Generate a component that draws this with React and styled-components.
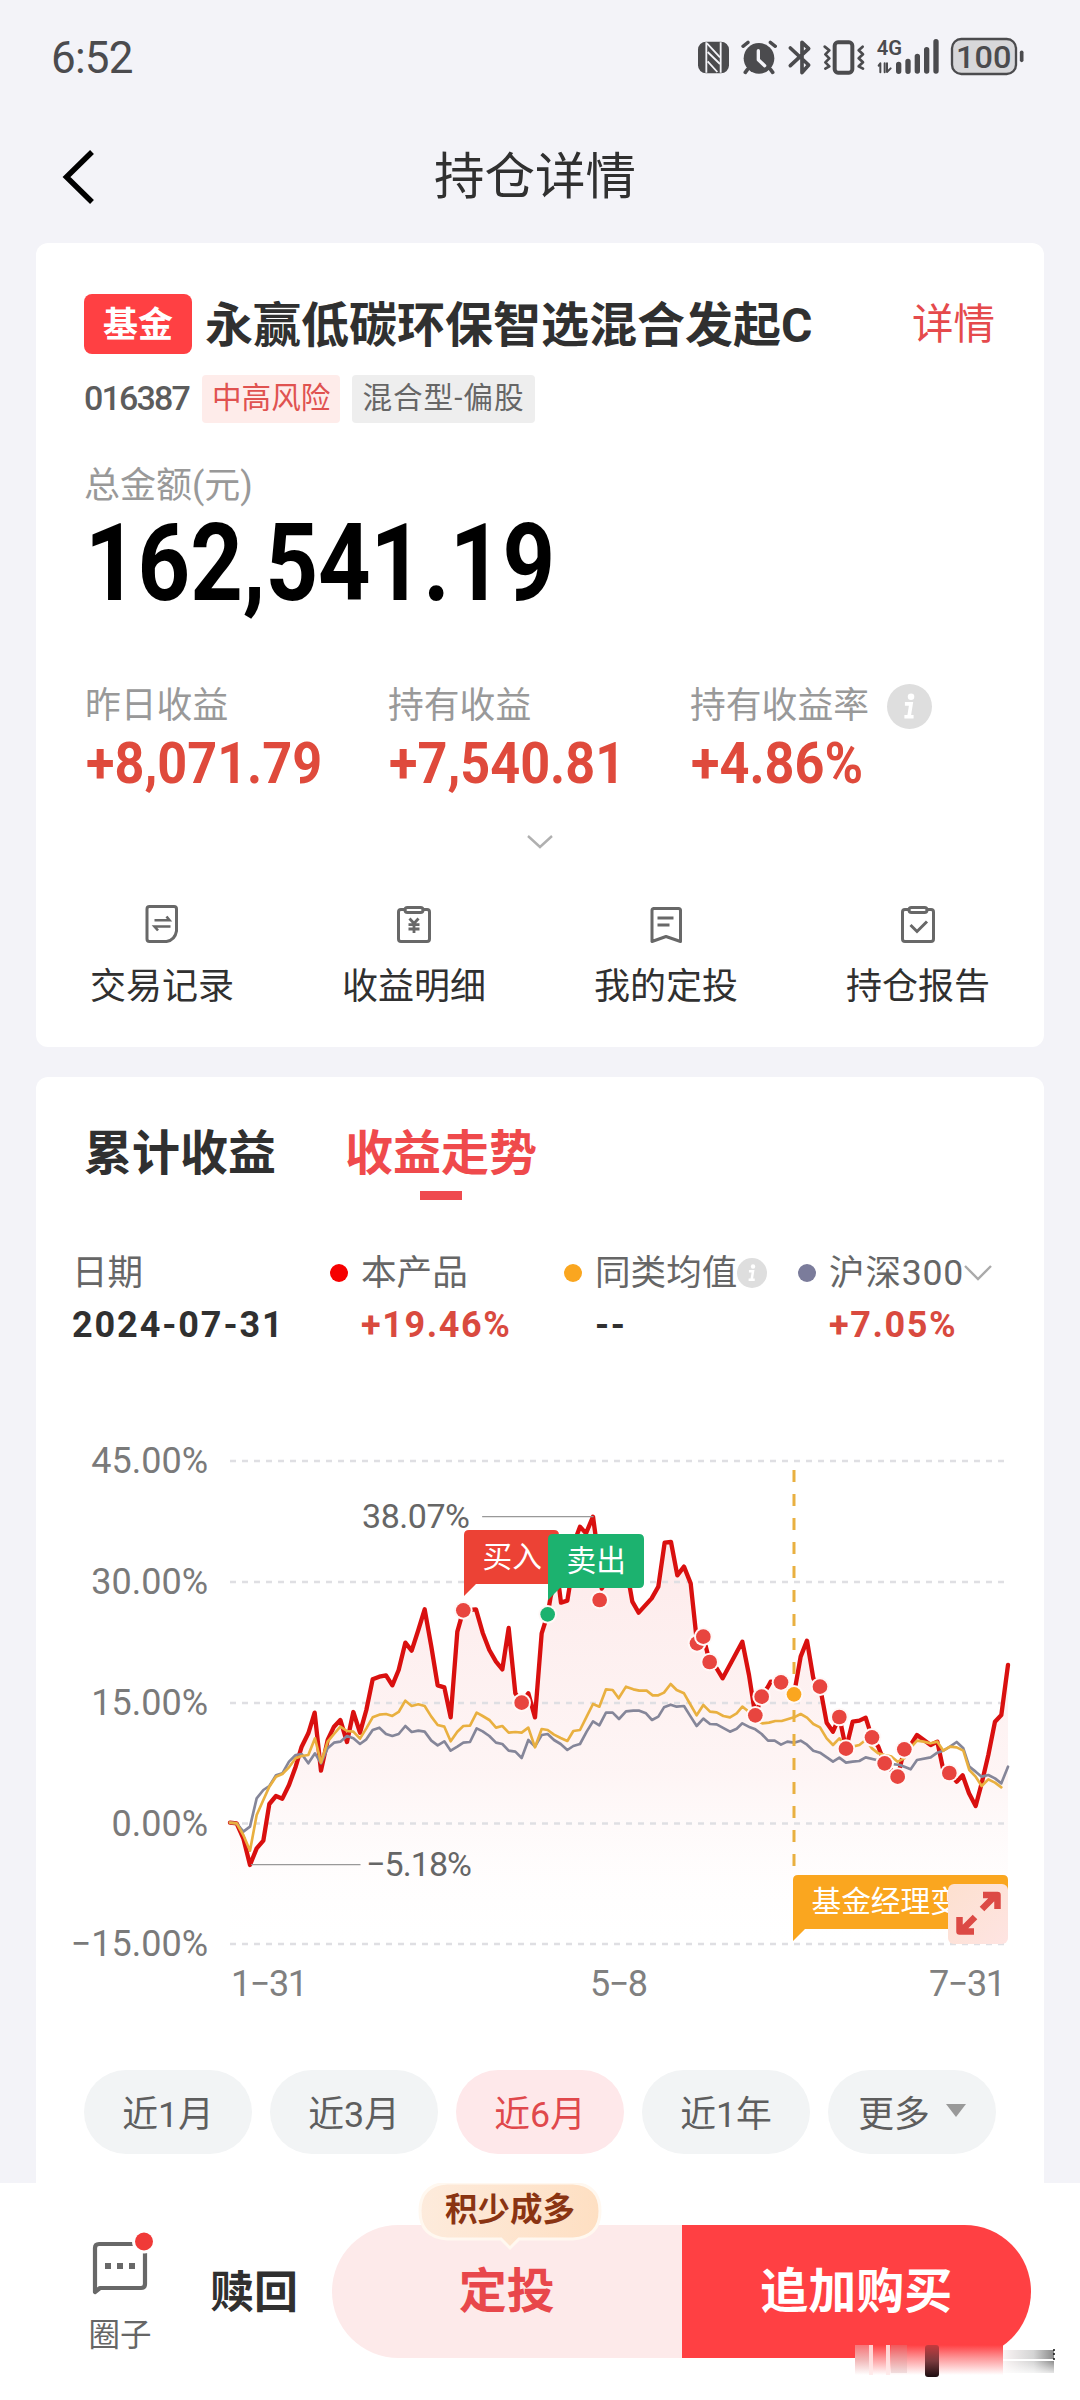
import React from "react";
import styled, { createGlobalStyle } from "styled-components";

const GlobalStyle = createGlobalStyle`
  * { box-sizing: border-box; }
  body {
    margin: 0;
    background: #f3f3f8;
    font-family: Roboto, "Noto Sans CJK SC", sans-serif;
    color: #303030;
  }
`;

const Screen = styled.div`
  width: 1080px;
  height: 2400px;
  display: flex;
  flex-direction: column;
  overflow: hidden;
  background: #f3f3f8;
  white-space: nowrap;
`;

const StatusBar = styled.header`
  height: 114px;
  padding: 20px 20px 0 51px;
  display: flex;
  justify-content: space-between;
`;
const Clock = styled.div`
  font-size: 44px;
  line-height: 77px;
  color: #4b4b4e;
  letter-spacing: -0.8px;
`;

const NavBar = styled.nav`
  height: 129px;
  padding: 0 64px 0 60px;
  display: grid;
  grid-template-columns: 40px 1fr 46px;
  align-items: start;
`;
const BackIcon = styled.svg`
  width: 40px;
  height: 60px;
  margin-top: 33px;
`;
const NavTitle = styled.h1`
  margin: 0;
  text-align: center;
  font-size: 50.5px;
  font-weight: 400;
  line-height: 125px;
`;

const Card = styled.section`
  margin: 0 36px 30px;
  height: ${(p) => p.$h}px;
  flex: none;
  background: #fff;
  border-radius: ${(p) => (p.$open ? "12px 12px 0 0" : "12px")};
  display: flex;
  flex-direction: column;
`;

const FundHeader = styled.div`
  margin: 51px 49px 0 48px;
  height: 60px;
  display: flex;
  align-items: center;
`;
const FundTag = styled.span`
  width: 108px;
  height: 60px;
  border-radius: 8px;
  background: #ff4043;
  color: #fff;
  font-size: 35px;
  font-weight: 700;
  line-height: 63px;
  text-align: center;
`;
const FundName = styled.h2`
  margin: 0 auto 0 13px;
  font-size: 48px;
  font-weight: 700;
  line-height: 60px;
  padding-top: 3px;
`;
const DetailLink = styled.a`
  font-size: 41.5px;
  line-height: 62px;
  padding-top: 2px;
  color: #e54a4c;
`;

const TagRow = styled.div`
  margin: 21px 48px 0;
  height: 48px;
  display: flex;
  align-items: center;
`;
const FundCode = styled.span`
  width: 118px;
  padding-bottom: 3px;
  font-size: 34px;
  font-weight: 500;
  letter-spacing: -1.8px;
  color: #5c5c5c;
`;
const SmallTag = styled.span`
  height: 48px;
  padding: 0 10px;
  margin-right: 12px;
  border-radius: 4px;
  font-size: 29.6px;
  line-height: 46px;
  letter-spacing: ${(p) => (p.$risk ? 0 : 1)}px;
  color: ${(p) => (p.$risk ? "#e05250" : "#666")};
  background: ${(p) => (p.$risk ? "#feecea" : "#eeeeee")};
`;

const TotalLabel = styled.div`
  margin: 35px 0 0 48px;
  height: 56px;
  font-size: 36px;
  line-height: 57px;
  color: #999;
`;
const TotalValue = styled.div`
  margin: 0 0 0 49px;
  height: 100px;
  font-size: 107px;
  font-weight: 700;
  line-height: 100px;
  color: #000;
  transform: scaleX(0.857);
  transform-origin: 0 50%;
`;

const StatGrid = styled.div`
  margin: 64px 0 0 49px;
  display: grid;
  grid-template-columns: 303px 302px 303px;
`;
const StatLabel = styled.div`
  height: 56px;
  display: flex;
  align-items: center;
  gap: 18px;
  font-size: 35.8px;
  line-height: 56px;
  color: #999;
`;
const StatValue = styled.div`
  height: 58px;
  margin-left: 1px;
  font-size: 58px;
  font-weight: 700;
  line-height: 58px;
  color: #df4a3c;
  transform: scaleX(0.9);
  transform-origin: 0 50%;
`;
const InfoSvg = styled.svg`
  width: ${(p) => p.$size}px;
  height: ${(p) => p.$size}px;
  flex: none;
`;
const ExpandRow = styled.div`
  height: 99px;
  display: flex;
  align-items: center;
  justify-content: center;
`;

const ActionGrid = styled.div`
  display: grid;
  grid-template-columns: repeat(4, 252px);
`;
const Action = styled.div`
  display: flex;
  flex-direction: column;
  align-items: center;
`;
const ActionIcon = styled.svg`
  width: 42px;
  height: 42px;
  margin-top: 12px;
`;
const ActionLabel = styled.span`
  margin-top: 14px;
  font-size: 36px;
  line-height: 56px;
`;

const Tabs = styled.div`
  margin: 44px 0 0 48px;
  height: 80px;
  display: flex;
  gap: 69px;
`;
const Tab = styled.div`
  font-size: 48px;
  font-weight: 700;
  line-height: 66px;
  color: ${(p) => (p.$active ? "#ef4a4c" : "#303030")};
  display: flex;
  flex-direction: column;
  align-items: center;
`;
const TabMark = styled.i`
  width: 42px;
  height: 9px;
  margin-top: 4px;
  background: #ef4a4e;
`;

const Legend = styled.div`
  margin: 44px 0 0 36px;
  height: 143px;
  display: grid;
  align-content: start;
  grid-template-columns: 258px 234px 234px 240px;
`;
const LegendCol = styled.div`
  display: flex;
  flex-direction: column;
  padding-left: ${(p) => (p.$first ? 0 : 31)}px;
`;
const LegendLabel = styled.div`
  margin-left: ${(p) => (p.$dot ? -31 : 0)}px;
  height: 56px;
  display: flex;
  align-items: center;
  font-size: 35.6px;
  line-height: 56px;
  letter-spacing: ${(p) => p.$ls || 0}px;
  color: #666;
`;
const Dot = styled.i`
  width: 18px;
  height: 18px;
  margin-right: 13px;
  border-radius: 50%;
  background: ${(p) => p.$c};
`;
const LegendValue = styled.div`
  height: 48px;
  font-size: 36px;
  font-weight: 700;
  line-height: 48px;
  letter-spacing: ${(p) => p.$ls || 1.6}px;
  color: ${(p) => (p.$up ? "#d94a3f" : "#303030")};
`;

const ChartSvg = styled.svg`
  display: block;
  width: 1008px;
  height: 640px;
  flex: none;
`;

const PillRow = styled.div`
  margin: 42px 48px 0;
  display: flex;
  gap: 18px;
`;
const Pill = styled.div`
  width: 168px;
  height: 84px;
  padding-bottom: 3px;
  border-radius: 42px;
  display: flex;
  align-items: center;
  justify-content: center;
  gap: 16px;
  font-size: 35.8px;
  color: ${(p) => (p.$active ? "#e0484c" : "#5e5e5e")};
  background: ${(p) => (p.$active ? "#fee8ea" : "#f2f4f5")};
`;

const Footer = styled.footer`
  position: relative;
  height: 217px;
  flex: none;
  margin-top: -30px;
  background: #fff;
  display: flex;
`;
const Circle = styled.div`
  width: 122px;
  margin-left: 59px;
  padding-top: 42px;
  display: flex;
  flex-direction: column;
  align-items: center;
  font-size: 31.5px;
  line-height: 46px;
  color: #666;
`;
const CircleIcon = styled.svg`
  width: 70px;
  height: 70px;
  margin-bottom: 18px;
`;
const Redeem = styled.div`
  width: 151px;
  padding-left: 29px;
  font-size: 44px;
  font-weight: 700;
  line-height: 221px;
`;
const BuyGroup = styled.div`
  margin-top: 42px;
  width: 699px;
  height: 133px;
  display: flex;
  border-radius: 67px;
  overflow: hidden;
`;
const BuyButton = styled.div`
  flex: 1;
  text-align: center;
  font-size: 48px;
  font-weight: 700;
  line-height: 133px;
  color: ${(p) => (p.$primary ? "#fff" : "#e8474b")};
  background: ${(p) => (p.$primary ? "#ff4043" : "#fdeaea")};
`;
const Bubble = styled.div`
  position: absolute;
  left: 417px;
  top: 0;
  width: 186px;
  height: 68px;
  display: flex;
  justify-content: center;
  font-size: 32.5px;
  font-weight: 700;
  line-height: 54px;
  color: #8a3412;
`;
const BubbleShape = styled.svg`
  position: absolute;
  inset: 0;
  width: 186px;
  height: 68px;
`;
const BubbleText = styled.span`
  position: relative;
`;
const Smear = styled.svg`
  position: absolute;
  left: 850px;
  top: 159px;
  width: 210px;
  height: 44px;
`;

function StatusIcons() {
  const c = "#4b4b4e";
  return (
    <svg width="400" height="80" viewBox="0 0 1200 240" fill="none" stroke={c} strokeLinecap="round" strokeLinejoin="round">
      <rect x="114" y="65" width="93" height="95" rx="24" fill={c} stroke="none" />
      <g stroke="#f3f3f8" strokeLinecap="butt" strokeWidth="5.500">
        <path d="M139 67V158M182 67V158" />
        <path d="M141 70L180 112M143 96L180 132M143 124L172 156" />
      </g>
      <circle cx="297" cy="115" r="46" fill={c} stroke="none" />
      <path d="M249 79L264 67M331 67L346 79" strokeWidth="10" />
      <path d="M262 149L256 157M332 149L338 157" strokeWidth="11" />
      <path d="M295 92V119L314 137" stroke="#f3f3f8" strokeWidth="10" />
      <path d="M391 84L446 135L426 158V67L446 86L391 137" strokeWidth="11" />
      <rect x="524" y="67" width="53" height="91" rx="10" strokeWidth="12" />
      <path d="M494 80L508 91L496 103L508 115L496 127L508 139L496 146" strokeWidth="8" />
      <path d="M608 80L596 91L609 103L596 115L609 127L596 139L609 146" strokeWidth="8" />
      <path d="M661 157V130L656 137M674 130V157M681 130V156L692 145" strokeWidth="6" />
      <path d="M716 133V154M744 124V154M772 109V153M800 89V153M828 65V153" strokeWidth="16" />
      <text x="650" y="106" fill={c} stroke="none" fontSize="61" fontWeight="600" textLength="76" lengthAdjust="spacingAndGlyphs">4G</text>
      <rect x="876" y="57" width="192" height="105" rx="28" fill="#d7d7da" strokeWidth="7" />
      <path d="M1085 97V121" strokeWidth="11" />
      <text x="888" y="143" fill={c} stroke="none" fontSize="94" fontWeight="500" textLength="166" lengthAdjust="spacingAndGlyphs">100</text>
    </svg>
  );
}

function Info({ size }) {
  return (
    <InfoSvg $size={size} viewBox="0 0 44 44">
      <circle cx="22" cy="22" r="22" fill="#dedede" />
      <circle cx="23.5" cy="12.5" r="3.2" fill="#fff" />
      <path d="M17.5 19.5H23.5L21.5 32M17 32H26" stroke="#fff" strokeWidth="3.6" fill="none" />
    </InfoSvg>
  );
}

function Chevron({ w, h, color }) {
  return (
    <svg width={w} height={h} viewBox={`0 0 ${w} ${h}`} fill="none" stroke={color} strokeWidth="2.4">
      <path d={`M1 1L${w / 2} ${h - 2}L${w - 1} 1`} />
    </svg>
  );
}

const iconArt = {
  record: (
    <>
      <path d="M8.500 3.500H33Q35.500 3.500 35.500 6V28Q34 37 25.500 38.500H8.500Q6 38.500 6 36V6Q6 3.500 8.500 3.500Z" />
      <path d="M13.500 17.300H28.500L25.500 13.500M29.500 23.500H13.500L17 27.500" strokeWidth="2.600" />
    </>
  ),
  detail: (
    <>
      <path d="M12 6.500H8Q5.500 6.500 5.500 9V36Q5.500 38.500 8 38.500H34Q36.500 38.500 36.500 36V9Q36.500 6.500 34 6.500H30" />
      <rect x="12" y="4.500" width="18" height="5" rx="2.500" />
      <path d="M16.500 15.500L21 20.500L25.500 15.500M21 20V30M15.500 21.700H26.500M15.500 26H26.500" strokeWidth="2.800" />
    </>
  ),
  plan: (
    <>
      <path d="M8 5.500H33.500Q35.500 5.500 35.500 7.500V38.500L21 33.500L7 38.500V7.500Q7 5.500 9 5.500" strokeLinejoin="round" />
      <path d="M12.500 15H28.500M12.500 22H24.500" />
    </>
  ),
  report: (
    <>
      <path d="M12 6.500H8Q5.500 6.500 5.500 9V36Q5.500 38.500 8 38.500H34Q36.500 38.500 36.500 36V9Q36.500 6.500 34 6.500H30" />
      <rect x="12" y="4.500" width="18" height="5" rx="2.500" />
      <path d="M13.500 22L20 28.500L30 18.500" />
    </>
  ),
};

const actions = [
  ["record", "交易记录"],
  ["detail", "收益明细"],
  ["plan", "我的定投"],
  ["report", "持仓报告"],
];

const product =
  "90,1178 110,1180 130,1225 150,1305 170,1255 190,1232 208,1122 228,1098 247,1106 267,1065 287,1010 305,950 325,910 344,848 363,1022 383,930 402,890 421,870 441,936 460,846 480,908 499,840 518,748 538,740 558,736 577,766 596,720 616,638 635,662 655,600 674,538 694,650 713,766 733,772 752,862 772,605 790,541 828,538 848,608 868,660 888,695 907,718 926,594 946,790 965,818 985,790 1005,862 1025,610 1043,553 1052,500 1072,430 1083,518 1102,512 1112,450 1125,330 1140,290 1158,310 1179,260 1198,400 1205,476 1240,420 1270,400 1290,475 1297,515 1316,548 1355,505 1375,470 1394,338 1413,336 1432,436 1452,410 1472,460 1487,600 1491,640 1510,620 1529,695 1550,715 1568,745 1627,635 1647,735 1666,856 1685,800 1704,770 1712,755 1743,757 1782,793 1802,680 1821,632 1840,745 1860,770 1880,878 1899,905 1918,861 1938,956 1958,875 1978,872 1997,863 2016,922 2035,950 2054,1000 2093,1040 2113,958 2132,945 2151,915 2192,945 2212,935 2230,1020 2248,1029 2270,1055 2288,1036 2307,1090 2327,1128 2345,1060 2365,975 2385,875 2404,855 2424,705";
const average =
  "90,1178 110,1180 130,1215 150,1262 170,1155 190,1110 208,1070 228,1040 247,1032 267,1012 287,985 305,978 325,975 345,925 363,998 383,935 402,912 421,890 441,903 460,905 480,926 499,895 518,862 538,854 558,852 577,858 596,846 616,812 635,828 655,823 674,828 694,860 713,885 733,890 752,934 772,905 790,888 810,887 830,848 848,858 868,870 888,893 907,888 926,908 946,906 965,908 985,893 1005,952 1025,897 1043,900 1062,914 1082,924 1102,933 1120,903 1140,900 1160,860 1179,822 1198,830 1218,778 1238,780 1256,805 1278,770 1300,778 1318,782 1340,782 1358,796 1375,796 1392,788 1412,762 1430,780 1452,790 1472,825 1490,856 1510,825 1530,845 1550,847 1570,858 1590,862 1610,850 1627,830 1640,840 1666,870 1687,880 1707,878 1726,873 1745,873 1782,862 1802,852 1821,863 1840,882 1860,892 1880,925 1899,945 1918,925 1938,950 1958,950 1978,945 1997,930 2016,955 2035,970 2054,975 2075,980 2093,995 2113,985 2130,955 2151,932 2171,935 2192,940 2212,935 2230,962 2250,950 2270,952 2290,962 2308,1020 2327,1040 2345,1068 2365,1048 2385,1058 2404,1072";
const index300 =
  "90,1178 110,1180 130,1205 150,1190 170,1105 190,1080 208,1068 228,1036 247,1030 267,995 287,975 305,972 325,1000 345,970 363,1000 383,955 402,938 421,935 441,918 460,925 480,942 499,928 518,900 538,893 558,912 577,918 596,912 616,888 635,906 655,902 674,905 694,932 713,946 733,934 752,962 772,950 790,938 810,936 830,895 848,904 868,918 888,938 907,942 926,962 946,965 965,984 985,930 1005,950 1025,915 1043,912 1062,930 1082,942 1102,960 1120,948 1140,942 1160,905 1179,874 1198,886 1218,848 1238,848 1257,867 1278,844 1300,842 1318,842 1338,850 1356,870 1375,860 1392,832 1412,824 1430,830 1452,828 1472,860 1490,888 1510,866 1530,882 1550,883 1590,905 1610,896 1627,880 1650,892 1666,898 1685,912 1704,932 1724,932 1743,944 1762,935 1782,938 1802,932 1821,944 1840,962 1860,968 1899,995 1918,983 1938,998 1958,995 1978,993 1997,982 2030,990 2060,1000 2100,1005 2132,1018 2151,990 2192,982 2212,968 2230,962 2250,950 2270,936 2290,955 2308,1010 2327,1025 2345,1040 2365,1035 2385,1045 2404,1060 2424,1010";

const buys = [
  [790, 541], [965, 818], [1199, 510], [1491, 640], [1510, 620], [1529, 696], [1666, 856],
  [1685, 800], [1743, 757], [1860, 770], [1918, 861], [1938, 956], [2016, 922], [2054, 1000],
  [2093, 1040], [2113, 958], [2248, 1029],
];
const axis = [["45.00%", 1461], ["30.00%", 1582], ["15.00%", 1703], ["0.00%", 1823.5], ["−15.00%", 1944]];

function Marker({ x, y, color }) {
  return (
    <>
      <circle cx={x} cy={y} r="28" fill="#fff8f7" />
      <circle cx={x} cy={y} r="22" fill={color} />
    </>
  );
}

function Flag({ x, y, w, color, text }) {
  return (
    <>
      <path d={`M${x} ${y + 66}V${y + 5}Q${x} ${y} ${x + 5} ${y}H${x + w - 5}Q${x + w} ${y} ${x + w} ${y + 5}V${y + 49}Q${x + w} ${y + 54} ${x + w - 5} ${y + 54}H${x + 12}Z`} fill={color} />
      <text x={x + 18.500} y={y + 37} fill="#fff" fontSize="29.700">{text}</text>
    </>
  );
}

function TrendChart() {
  return (
    <ChartSvg viewBox="36 1388 1008 640">
      <defs>
        <linearGradient id="area" x1="0" y1="1517" x2="0" y2="1944" gradientUnits="userSpaceOnUse">
          <stop offset="0" stopColor="#fce0e0" stopOpacity="0.700" />
          <stop offset="0.600" stopColor="#fdeeee" stopOpacity="0.600" />
          <stop offset="1" stopColor="#fff" stopOpacity="0.100" />
        </linearGradient>
        <linearGradient id="expand" x1="0" y1="0" x2="1" y2="1">
          <stop offset="0" stopColor="#fde0cf" />
          <stop offset="1" stopColor="#fee4e2" />
        </linearGradient>
      </defs>
      <polygon points={`230,1944 ${product.split(" ").map((p) => { const [x, y] = p.split(","); return `${200 + x / 3},${1430 + y / 3}`; }).join(" ")} 1008,1944`} fill="url(#area)" />
      {axis.map(([t, y]) => (
        <g key={t}>
          <path d={`M230 ${y}H1006`} stroke="#dfdfe3" strokeWidth="2.400" strokeDasharray="6 6" />
          <text x="208" y={y + 12} textAnchor="end" fontSize="36" fill="#7a7a7a">{t}</text>
        </g>
      ))}
      <g fontSize="36" fill="#808080">
        <text x="231" y="1996" textLength="77">1−31</text>
        <text x="590" y="1996" textLength="58">5−8</text>
        <text x="929" y="1996" textLength="77">7−31</text>
      </g>
      <g transform="translate(200 1430) scale(0.33333)" fill="none" strokeLinejoin="round" strokeLinecap="round">
        <polyline points={product} stroke="#d9100f" strokeWidth="13" />
        <polyline points={index300} stroke="#858699" strokeWidth="8" />
        <polyline points={average} stroke="#e9b040" strokeWidth="8" />
        <path d="M1782 120V1310" stroke="#e9b040" strokeWidth="9" strokeDasharray="36 36" strokeLinecap="butt" />
        <path d="M848 260H1179M155 1304H480" stroke="#999" strokeWidth="4" />
        {buys.map(([x, y]) => (
          <Marker key={x} x={x} y={y} color="#e8453f" />
        ))}
        <Marker x={1782} y={793} color="#faa61f" />
        <Marker x={1043} y={553} color="#1cb26f" />
      </g>
      <text x="362" y="1527.500" fontSize="34" fill="#666" textLength="108">38.07%</text>
      <text x="366" y="1875.500" fontSize="34" fill="#666" textLength="106">−5.18%</text>
      <Flag x={464} y={1530} w={95} color="#ec4235" text="买入" />
      <Flag x={548} y={1534} w={96} color="#1cb26f" text="卖出" />
      <Flag x={793} y={1875} w={215} color="#faa61f" text="基金经理变更" />
      <rect x="948" y="1884" width="60" height="60" rx="6" fill="url(#expand)" />
      <g fill="none" stroke="#dc4a45" strokeWidth="6.500" strokeLinejoin="round">
        <path d="M982 1909L997 1894M983 1895H997.500V1909" />
        <path d="M975 1917L960 1932M959.500 1917V1931.500H974" />
      </g>
    </ChartSvg>
  );
}

export default function App() {
  return (
    <>
      <GlobalStyle />
      <Screen>
        <StatusBar>
          <Clock>6:52</Clock>
          <StatusIcons />
        </StatusBar>
        <NavBar>
          <BackIcon viewBox="0 0 40 60" fill="none" stroke="#000" strokeWidth="5.500">
            <path d="M32 5L6.500 30L32 55" />
          </BackIcon>
          <NavTitle>持仓详情</NavTitle>
        </NavBar>

        <Card $h={804}>
          <FundHeader>
            <FundTag>基金</FundTag>
            <FundName>永赢低碳环保智选混合发起C</FundName>
            <DetailLink>详情</DetailLink>
          </FundHeader>
          <TagRow>
            <FundCode>016387</FundCode>
            <SmallTag $risk>中高风险</SmallTag>
            <SmallTag>混合型-偏股</SmallTag>
          </TagRow>
          <TotalLabel>总金额(元)</TotalLabel>
          <TotalValue>162,541.19</TotalValue>
          <StatGrid>
            <div>
              <StatLabel>昨日收益</StatLabel>
              <StatValue>+8,071.79</StatValue>
            </div>
            <div>
              <StatLabel>持有收益</StatLabel>
              <StatValue>+7,540.81</StatValue>
            </div>
            <div>
              <StatLabel>持有收益率<Info size={45} /></StatLabel>
              <StatValue>+4.86%</StatValue>
            </div>
          </StatGrid>
          <ExpandRow>
            <Chevron w={26} h={14} color="#b0b0b0" />
          </ExpandRow>
          <ActionGrid>
            {actions.map(([k, label]) => (
              <Action key={k}>
                <ActionIcon viewBox="0 0 42 42" fill="none" stroke="#686868" strokeWidth="3">
                  {iconArt[k]}
                </ActionIcon>
                <ActionLabel>{label}</ActionLabel>
              </Action>
            ))}
          </ActionGrid>
        </Card>

        <Card $h={1106} $open>
          <Tabs>
            <Tab>累计收益</Tab>
            <Tab $active>收益走势<TabMark /></Tab>
          </Tabs>
          <Legend>
            <LegendCol $first>
              <LegendLabel>日期</LegendLabel>
              <LegendValue $ls={1.9}>2024-07-31</LegendValue>
            </LegendCol>
            <LegendCol>
              <LegendLabel $dot><Dot $c="#f60000" />本产品</LegendLabel>
              <LegendValue $up>+19.46%</LegendValue>
            </LegendCol>
            <LegendCol>
              <LegendLabel $dot><Dot $c="#faa61f" />同类均值<Info size={30} /></LegendLabel>
              <LegendValue>--</LegendValue>
            </LegendCol>
            <LegendCol>
              <LegendLabel $dot $ls={0.8}><Dot $c="#7b7c9b" />沪深300<Chevron w={28} h={16} color="#aaa" /></LegendLabel>
              <LegendValue $up>+7.05%</LegendValue>
            </LegendCol>
          </Legend>
          <TrendChart />
          <PillRow>
            <Pill>近1月</Pill>
            <Pill>近3月</Pill>
            <Pill $active>近6月</Pill>
            <Pill>近1年</Pill>
            <Pill>
              更多
              <svg width="20" height="13" viewBox="0 0 20 13"><path d="M0 0H20L10 13Z" fill="#999" /></svg>
            </Pill>
          </PillRow>
        </Card>

        <Footer>
          <Circle>
            <CircleIcon viewBox="0 0 70 70" fill="none">
              <path d="M10 67V23Q10 19 14 19H56Q60 19 60 23V59Q60 63 56 63H15Z" stroke="#686868" strokeWidth="4.200" strokeLinejoin="round" />
              <path d="M20 38H26V44H20ZM32 38H38V44H32ZM44 38H50V44H44Z" fill="#686868" />
              <circle cx="59" cy="16.500" r="12" fill="#fff" />
              <circle cx="59" cy="16.500" r="9" fill="#f03a38" />
            </CircleIcon>
            圈子
          </Circle>
          <Redeem>赎回</Redeem>
          <BuyGroup>
            <BuyButton>定投</BuyButton>
            <BuyButton $primary>追加购买</BuyButton>
          </BuyGroup>
          <Bubble>
            <BubbleShape viewBox="0 0 186 68">
              <defs>
                <linearGradient id="bubble">
                  <stop offset="0" stopColor="#fdebdc" />
                  <stop offset="1" stopColor="#fedfc2" />
                </linearGradient>
              </defs>
              <path d="M30 0H156Q183 2 183 28Q183 54 156 56H102L93 65L84 56H30Q3 54 3 28Q3 2 30 0Z" fill="url(#bubble)" stroke="#fff8f0" strokeWidth="3" />
            </BubbleShape>
            <BubbleText>积少成多</BubbleText>
          </Bubble>
          <Smear viewBox="0 0 210 44">
            <defs>
              <linearGradient id="fadeRed" x1="0" y1="0" x2="0" y2="1">
                <stop offset="0" stopColor="#ff4043" />
                <stop offset="0.400" stopColor="#fd9092" />
                <stop offset="1" stopColor="#fff" />
              </linearGradient>
              <linearGradient id="fadePale" x1="0" y1="0" x2="0" y2="1">
                <stop offset="0" stopColor="#f58285" />
                <stop offset="0.500" stopColor="#eebcbc" />
                <stop offset="1" stopColor="#fff" />
              </linearGradient>
              <linearGradient id="fadeDark" x1="0" y1="0" x2="0" y2="1">
                <stop offset="0" stopColor="#c43a3d" />
                <stop offset="0.500" stopColor="#7a3a3e" />
                <stop offset="1" stopColor="#1d0d10" />
              </linearGradient>
              <linearGradient id="fadeGray" x1="0" y1="0" x2="1" y2="0">
                <stop offset="0" stopColor="#faf4f4" />
                <stop offset="0.600" stopColor="#d4d4d4" />
                <stop offset="1" stopColor="#8a8a8a" />
              </linearGradient>
              <linearGradient id="toWhite" x1="0" y1="0" x2="0" y2="1">
                <stop offset="0" stopColor="#fff" stopOpacity="0" />
                <stop offset="1" stopColor="#fff" stopOpacity="0.850" />
              </linearGradient>
            </defs>
            <rect x="5" y="3" width="148" height="30" fill="url(#fadeRed)" />
            <rect x="5" y="3" width="14" height="30" fill="url(#fadePale)" opacity="0.800" />
            <rect x="19" y="3" width="4" height="30" fill="#ffe8e8" opacity="0.850" />
            <rect x="36" y="3" width="4" height="30" fill="#ffe8e8" opacity="0.850" />
            <rect x="41" y="3" width="16" height="28" fill="#c9a0a0" opacity="0.250" />
            <rect x="75" y="3" width="14" height="32" rx="3" fill="url(#fadeDark)" />
            <rect x="153" y="8" width="51" height="9" fill="url(#fadeGray)" />
            <rect x="153" y="19" width="51" height="12" fill="url(#fadeGray)" />
            <rect x="153" y="19" width="51" height="13" fill="url(#toWhite)" />
            <path d="M203 8H205M203 12H205M203 17H205" stroke="#111" strokeWidth="1.500" />
          </Smear>
        </Footer>
      </Screen>
    </>
  );
}
